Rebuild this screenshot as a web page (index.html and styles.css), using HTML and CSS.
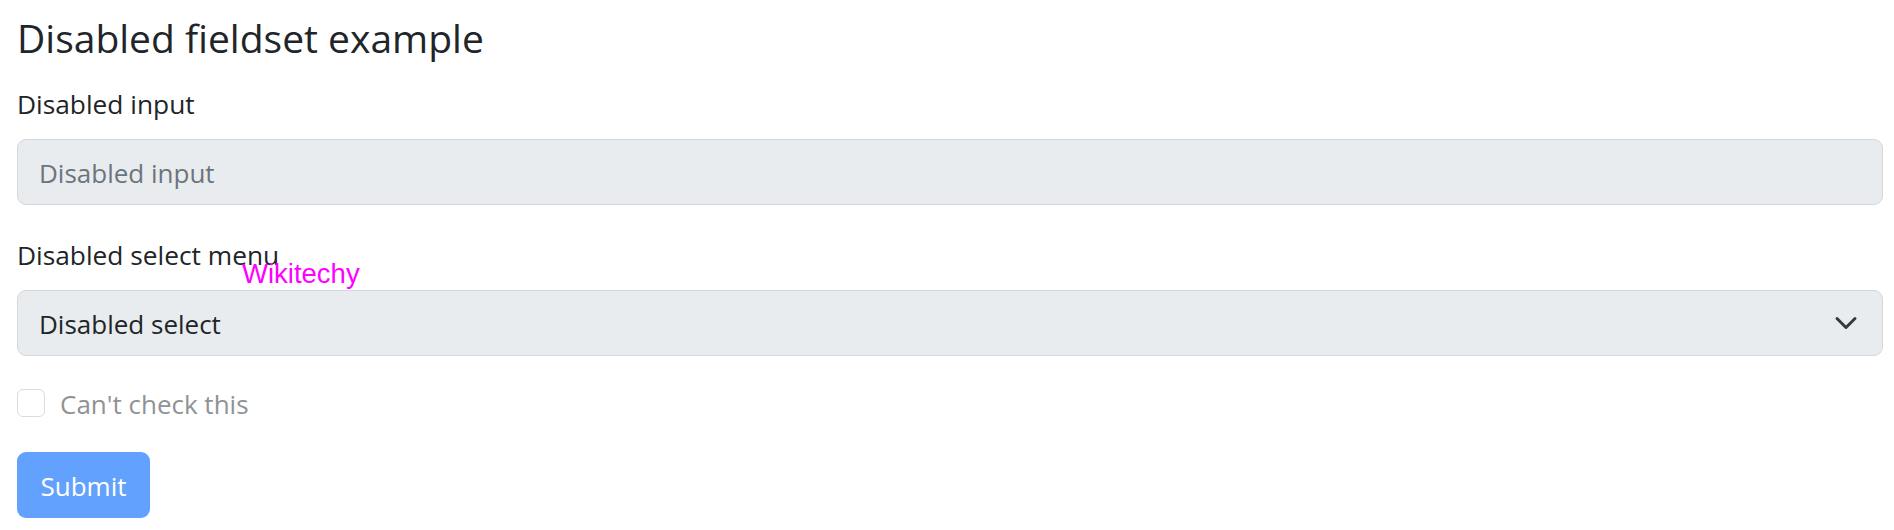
FILE: index.html
```html
<!DOCTYPE html>
<html lang="en">
<head>
<meta charset="utf-8">
<title>Disabled fieldset example</title>
<link rel="stylesheet" href="styles.css">
</head>
<body>
<form class="page">
  <fieldset class="fieldset" disabled>
    <h1 class="legend">Disabled fieldset example</h1>
    <div class="group">
      <label class="label" for="disabledTextInput">Disabled input</label>
      <input class="control" id="disabledTextInput" type="text" placeholder="Disabled input">
    </div>
    <div class="group">
      <label class="label" for="disabledSelect">Disabled select menu</label>
      <div class="control select" id="disabledSelect">
        <span class="select-text">Disabled select</span>
        <svg class="chevron" width="24" height="24" viewBox="0 0 16 16" aria-hidden="true">
          <path d="m2 5 6 6 6-6" fill="none" stroke="#343a40" stroke-width="2" stroke-linecap="round" stroke-linejoin="round"/>
        </svg>
      </div>
    </div>
    <div class="check">
      <span class="check-box"></span>
      <span class="check-label">Can't check this</span>
    </div>
    <button class="btn" type="button">Submit</button>
  </fieldset>
  <span class="watermark">Wikitechy</span>
</form>
</body>
</html>
```
FILE: styles.css
```css
* { box-sizing: border-box; }
html, body { margin: 0; padding: 0; background: #fff; }
body {
  font-family: "Open Sans", "Noto Sans", sans-serif;
  color: #212529;
}
.page {
  position: relative;
  padding: 15px 11px 0 17px;
}
.fieldset {
  border: 0;
  margin: 0;
  padding: 0;
  min-width: 0;
}
.legend {
  font-size: 39px;
  font-weight: 400;
  line-height: 1.2;
  margin: 0 0 23px 0;
  color: #212529;
}
.group {
  display: flex;
  flex-direction: column;
  margin-bottom: 30.8px;
}
.label {
  display: block;
  font-size: 26.3px;
  line-height: 39px;
  margin-bottom: 15px;
  color: #212529;
}
.control {
  display: flex;
  align-items: center;
  width: 100%;
  height: 66px;
  padding: 3px 21px 0 21px;
  font-family: "Open Sans", "Noto Sans", sans-serif;
  font-size: 26px;
  line-height: 39px;
  color: #212529;
  background: #e9ecef;
  border: 1px solid #d3d7dc;
  border-radius: 9px;
  outline: none;
  margin: 0;
}
.control::placeholder { color: #6c757d; opacity: 1; }
.select {
  justify-content: space-between;
  padding-right: 24px;
}
.select-text { color: #212529; }
.chevron { display: block; flex: none; margin-top: -3px; }
.check {
  display: flex;
  align-items: flex-start;
  gap: 15px;
  margin-top: -2px;
  margin-bottom: 28px;
}
.check-box {
  width: 28px;
  height: 28px;
  margin-top: 5px;
  border: 1px solid #dcdcdc;
  border-radius: 6px;
  background: #fff;
  flex: none;
}
.check-label {
  font-size: 26px;
  line-height: 39px;
  padding-top: 1px;
  color: #909294;
}
.btn {
  display: block;
  height: 66px;
  width: 133px;
  padding: 2px 0 0 0;
  font-family: "Open Sans", "Noto Sans", sans-serif;
  font-size: 26px;
  line-height: 39px;
  color: #fff;
  background: #62a1fe;
  border: 0;
  border-radius: 9px;
}
.watermark {
  position: absolute;
  left: 242px;
  top: 259.7px;
  font-family: "Liberation Sans", Arial, sans-serif;
  font-size: 27.5px;
  line-height: 1;
  color: #ff00ff;
  white-space: nowrap;
}
```
